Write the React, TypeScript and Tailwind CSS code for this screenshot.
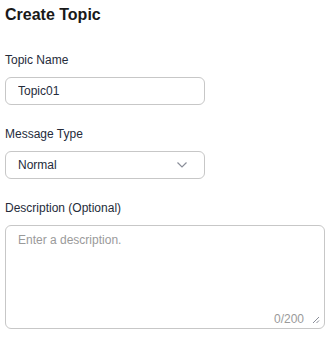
import { useState } from 'react';

const App = () => {
    const [name, setName] = useState('Topic01');
    const [desc, setDesc] = useState('');

    return (
        <div className="w-[330px] h-[337px] bg-white px-[5px] pt-[4px] text-[#252b3a]" style={{ fontFamily: '"Liberation Sans", Arial, sans-serif' }}>
            <div className="text-[16px] leading-[22px] font-bold text-[#191919]">Create Topic</div>

            <label htmlFor="topic-name" className="block mt-[26px] text-[12px] leading-[16px] text-[#252b3a]">
                Topic Name
            </label>
            <input
                id="topic-name"
                type="text"
                value={name}
                onChange={(e) => setName(e.target.value)}
                className="block mt-[9px] w-[200px] h-[28px] px-[12px] text-[12px] text-[#252b3a] border border-[#c7c7c7] rounded-[6px] outline-none"
            />

            <div className="mt-[21px] text-[12px] leading-[16px]">Message Type</div>
            <div className="mt-[9px] w-[200px] h-[28px] px-[12px] flex items-center justify-between border border-[#c7c7c7] rounded-[6px] text-[12px]">
                <span>Normal</span>
                <svg width="12" height="8" viewBox="0 0 12 8" fill="none" className="mr-[4px]">
                    <path d="M1.5 1.5 6 6 10.5 1.5" stroke="#8a8e99" strokeWidth="1.2" />
                </svg>
            </div>

            <label htmlFor="topic-desc" className="block mt-[21px] text-[12px] leading-[16px]">
                Description (Optional)
            </label>
            <div className="relative mt-[9px] w-[320px] h-[104px] border border-[#c7c7c7] rounded-[6px]">
                <textarea
                    id="topic-desc"
                    value={desc}
                    onChange={(e) => setDesc(e.target.value)}
                    placeholder="Enter a description."
                    className="w-full h-full px-[12px] py-[5px] text-[12px] leading-[18px] resize-none outline-none bg-transparent placeholder:text-[#9a9a9a]"
                />
                <div className="absolute right-[20px] bottom-[0px] text-[12px] text-[#9a9a9a]">{desc.length}/200</div>
                <svg width="8" height="8" viewBox="0 0 8 8" className="absolute right-[4px] bottom-[4px]">
                    <path d="M7 1 1 7M7 4.5 4.5 7" stroke="#8a8e99" strokeWidth="1" />
                </svg>
            </div>
        </div>
    );
};

export default App;
